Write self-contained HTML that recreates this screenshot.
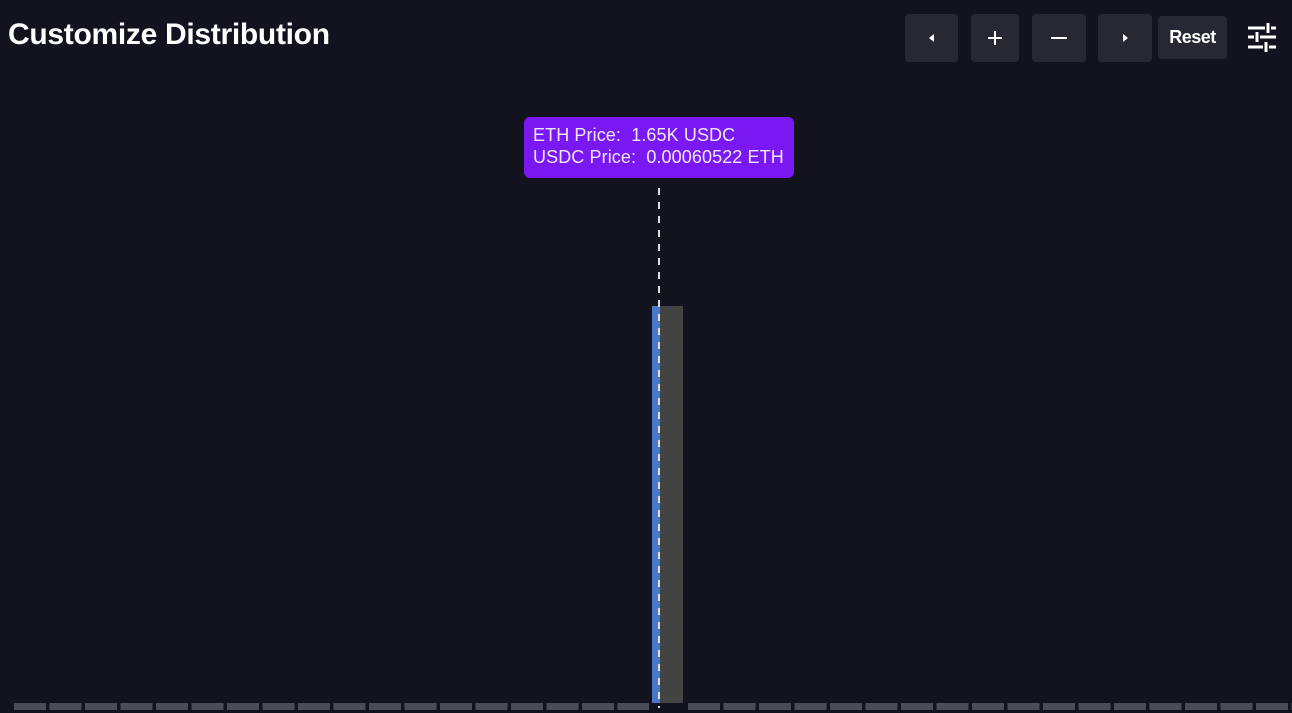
<!DOCTYPE html>
<html><head><style>
body{margin:0;width:1292px;height:713px;background:#12131f;position:relative;overflow:hidden;font-family:"Liberation Sans",sans-serif;color:#fff}
.t{position:absolute;left:8px;top:18px;font-size:30px;font-weight:bold;letter-spacing:-0.3px}
.b{position:absolute;background:#262833;border-radius:4px;display:flex;align-items:center;justify-content:center;color:#fff}
.tip{position:absolute;left:524px;top:117px;width:270px;height:61px;background:#7a18f4;border-radius:6px;box-sizing:border-box;padding:7px 0 0 9px;font-size:18px;line-height:22px;letter-spacing:0.1px;color:#f0e8ff}
.row{position:absolute;top:703px;height:7px;background:repeating-linear-gradient(90deg,#4a4c57 0 32px,transparent 32px 35.5px)}
</style></head><body>
<div class="t">Customize Distribution</div>
<div class="b" style="left:905px;top:14px;width:53px;height:48px"><svg width="8" height="10"><path d="M6 1L1 5L6 9Z" fill="#fff"/></svg></div>
<div class="b" style="left:971px;top:14px;width:48px;height:48px"><svg width="16" height="16"><path d="M8 1V15M1 8H15" stroke="#fff" stroke-width="2"/></svg></div>
<div class="b" style="left:1032px;top:14px;width:54px;height:48px"><svg width="16" height="4"><path d="M0 2H16" stroke="#fff" stroke-width="2"/></svg></div>
<div class="b" style="left:1098px;top:14px;width:54px;height:48px"><svg width="8" height="10"><path d="M2 1L7 5L2 9Z" fill="#fff"/></svg></div>
<div class="b" style="left:1158px;top:16px;width:69px;height:43px;font-size:18px;font-weight:bold;letter-spacing:-0.5px">Reset</div>
<svg style="position:absolute;left:1247px;top:23px" width="30" height="29"><g stroke="#fff" stroke-width="3"><path d="M1 5H18M24 5H29M21 0V10M1 14H7M13 14H29M10 9V19M1 24H16M22 24H29M19 19V29"/></g></svg>
<div class="tip">ETH Price:&nbsp; 1.65K USDC<br>USDC Price:&nbsp; 0.00060522 ETH</div>
<div style="position:absolute;left:652px;top:306px;width:8px;height:397px;background:#4a78c8"></div>
<div style="position:absolute;left:660px;top:306px;width:23px;height:397px;background:#434343"></div>
<div style="position:absolute;left:658px;top:188px;width:2px;height:520px;background:repeating-linear-gradient(180deg,#ddd 0 7px,transparent 7px 14px)"></div>
<div class="row" style="left:14px;width:635px"></div>
<div class="row" style="left:688px;width:604px"></div>
</body></html>
